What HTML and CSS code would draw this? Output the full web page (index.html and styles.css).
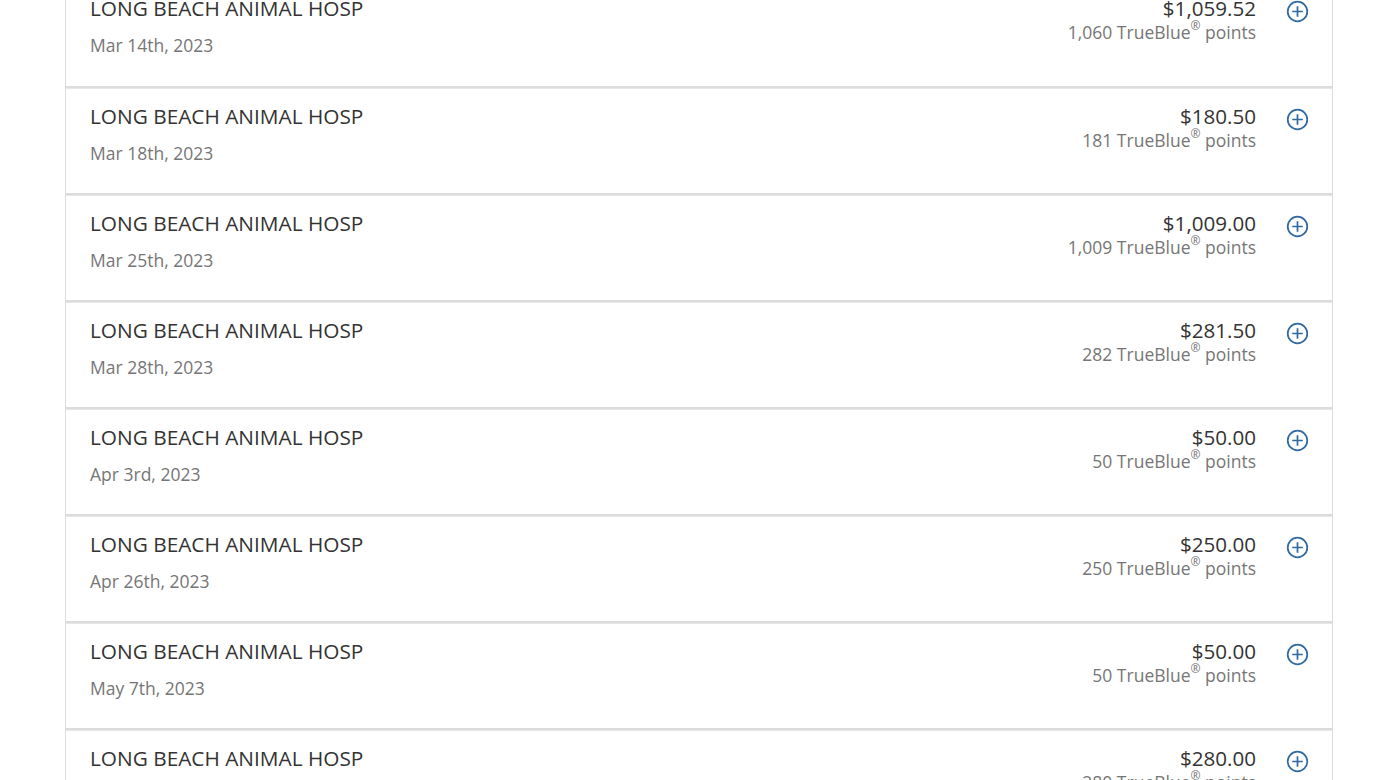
FILE: index.html
```html
<!DOCTYPE html>
<html>
<head>
<meta charset="utf-8">
<link rel="stylesheet" href="styles.css">
</head>
<body>
<div class="list">
  <div class="card">
    <div class="info"><div class="name">LONG BEACH ANIMAL HOSP</div><div class="date">Mar 14th, 2023</div></div>
    <div class="amounts"><div class="amount">$1,059.52</div><div class="points">1,060 TrueBlue<sup>®</sup> points</div></div>
    <div class="toggle"><svg viewBox="0 0 24 24" width="23" height="23"><circle cx="12" cy="12" r="10.2" fill="none" stroke="currentColor" stroke-width="1.8"/><path d="M12 6.5v11M6.5 12h11" stroke="currentColor" stroke-width="1.8" fill="none"/></svg></div>
  </div>
  <div class="card">
    <div class="info"><div class="name">LONG BEACH ANIMAL HOSP</div><div class="date">Mar 18th, 2023</div></div>
    <div class="amounts"><div class="amount">$180.50</div><div class="points">181 TrueBlue<sup>®</sup> points</div></div>
    <div class="toggle"><svg viewBox="0 0 24 24" width="23" height="23"><circle cx="12" cy="12" r="10.2" fill="none" stroke="currentColor" stroke-width="1.8"/><path d="M12 6.5v11M6.5 12h11" stroke="currentColor" stroke-width="1.8" fill="none"/></svg></div>
  </div>
  <div class="card">
    <div class="info"><div class="name">LONG BEACH ANIMAL HOSP</div><div class="date">Mar 25th, 2023</div></div>
    <div class="amounts"><div class="amount">$1,009.00</div><div class="points">1,009 TrueBlue<sup>®</sup> points</div></div>
    <div class="toggle"><svg viewBox="0 0 24 24" width="23" height="23"><circle cx="12" cy="12" r="10.2" fill="none" stroke="currentColor" stroke-width="1.8"/><path d="M12 6.5v11M6.5 12h11" stroke="currentColor" stroke-width="1.8" fill="none"/></svg></div>
  </div>
  <div class="card">
    <div class="info"><div class="name">LONG BEACH ANIMAL HOSP</div><div class="date">Mar 28th, 2023</div></div>
    <div class="amounts"><div class="amount">$281.50</div><div class="points">282 TrueBlue<sup>®</sup> points</div></div>
    <div class="toggle"><svg viewBox="0 0 24 24" width="23" height="23"><circle cx="12" cy="12" r="10.2" fill="none" stroke="currentColor" stroke-width="1.8"/><path d="M12 6.5v11M6.5 12h11" stroke="currentColor" stroke-width="1.8" fill="none"/></svg></div>
  </div>
  <div class="card">
    <div class="info"><div class="name">LONG BEACH ANIMAL HOSP</div><div class="date">Apr 3rd, 2023</div></div>
    <div class="amounts"><div class="amount">$50.00</div><div class="points">50 TrueBlue<sup>®</sup> points</div></div>
    <div class="toggle"><svg viewBox="0 0 24 24" width="23" height="23"><circle cx="12" cy="12" r="10.2" fill="none" stroke="currentColor" stroke-width="1.8"/><path d="M12 6.5v11M6.5 12h11" stroke="currentColor" stroke-width="1.8" fill="none"/></svg></div>
  </div>
  <div class="card">
    <div class="info"><div class="name">LONG BEACH ANIMAL HOSP</div><div class="date">Apr 26th, 2023</div></div>
    <div class="amounts"><div class="amount">$250.00</div><div class="points">250 TrueBlue<sup>®</sup> points</div></div>
    <div class="toggle"><svg viewBox="0 0 24 24" width="23" height="23"><circle cx="12" cy="12" r="10.2" fill="none" stroke="currentColor" stroke-width="1.8"/><path d="M12 6.5v11M6.5 12h11" stroke="currentColor" stroke-width="1.8" fill="none"/></svg></div>
  </div>
  <div class="card">
    <div class="info"><div class="name">LONG BEACH ANIMAL HOSP</div><div class="date">May 7th, 2023</div></div>
    <div class="amounts"><div class="amount">$50.00</div><div class="points">50 TrueBlue<sup>®</sup> points</div></div>
    <div class="toggle"><svg viewBox="0 0 24 24" width="23" height="23"><circle cx="12" cy="12" r="10.2" fill="none" stroke="currentColor" stroke-width="1.8"/><path d="M12 6.5v11M6.5 12h11" stroke="currentColor" stroke-width="1.8" fill="none"/></svg></div>
  </div>
  <div class="card">
    <div class="info"><div class="name">LONG BEACH ANIMAL HOSP</div><div class="date">May 12th, 2023</div></div>
    <div class="amounts"><div class="amount">$280.00</div><div class="points">280 TrueBlue<sup>®</sup> points</div></div>
    <div class="toggle"><svg viewBox="0 0 24 24" width="23" height="23"><circle cx="12" cy="12" r="10.2" fill="none" stroke="currentColor" stroke-width="1.8"/><path d="M12 6.5v11M6.5 12h11" stroke="currentColor" stroke-width="1.8" fill="none"/></svg></div>
  </div>
</div>
</body>
</html>
```
FILE: styles.css
```css
html, body {
  margin: 0;
  padding: 0;
  background: #fff;
  overflow: hidden;
  height: 780px;
}
body {
  font-family: "Open Sans", "Liberation Sans", sans-serif;
}
.list {
  margin: -19px 49px 0 65px;
  display: flex;
  flex-direction: column;
}
.card {
  box-sizing: border-box;
  height: 107px;
  border: 1px solid #dcdcdc;
  border-bottom-width: 2px;
  border-top-width: 0;
  display: flex;
  align-items: flex-start;
  padding: 14px 24px 0 24px;
}
.card + .card {
  border-top: 1px solid #e6e6e6;
}
.info {
  flex: 1;
}
.name {
  font-size: 20.8px;
  line-height: 27px;
  color: #333;
}
.date {
  margin-top: 11px;
  font-size: 17.5px;
  line-height: 24px;
  color: #767676;
}
.amounts {
  text-align: right;
}
.amount {
  font-size: 20.6px;
  line-height: 27px;
  color: #333;
}
.points {
  font-size: 17.5px;
  line-height: 20px;
  color: #767676;
}
.points sup {
  display: inline-block;
  font-size: 12px;
  line-height: 12px;
  vertical-align: top;
  margin-top: -2px;
}
.toggle {
  width: 24px;
  margin-left: 30px;
  margin-right: -2px;
  padding-top: 5px;
  color: #2f6aa3;
}
.toggle svg {
  display: block;
}
```
